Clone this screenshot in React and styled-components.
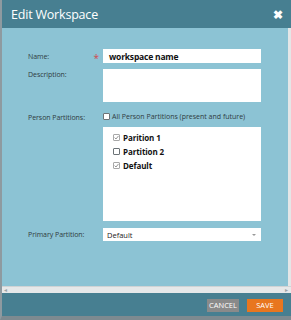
import React from 'react'
import { useState } from 'react'
import styled, { createGlobalStyle } from 'styled-components'

const GlobalStyle = createGlobalStyle`
  html, body {
    margin: 0;
    padding: 0;
    background: #ffffff;
  }
  body {
    font-family: "Open Sans", "Liberation Sans", sans-serif;
  }
`

const Dialog = styled.div`
  width: 291px;
  height: 320px;
  box-sizing: border-box;
  display: flex;
  flex-direction: column;
  border-left: 2px solid #8e9aa0;
  border-bottom: 4px solid #7d8a90;
  background-color: #477f91;
`
const Header = styled.div`
  height: 28px;
  flex: none;
  display: flex;
  align-items: center;
  justify-content: space-between;
  padding: 0 8px 0 9px;
  background-color: #477f91;
`
const Title = styled.h1`
  margin: 0;
  color: #ffffff;
  font-size: 12.5px;
  font-weight: 400;
  letter-spacing: -0.2px;
`
const Close = styled.span`
  color: #ffffff;
  font-size: 12px;
  font-weight: 700;
  line-height: 1;
  margin-top: 1px;
`
const BodyWrap = styled.div`
  flex: 1;
  display: flex;
  min-height: 0;
`
const Body = styled.div`
  flex: 1;
  background-color: #8cc3d4;
  padding: 21px 0 0 26px;
  display: grid;
  grid-template-columns: 68px 158px;
  column-gap: 7px;
  align-content: start;
`
const VScroll = styled.div`
  width: 3px;
  flex: none;
  background-color: #e4e6e7;
`
const HScroll = styled.div`
  height: 6px;
  flex: none;
  background-color: #e6e8e9;
  border-top: 1px solid #cfd3d5;
  display: flex;
  justify-content: space-between;
  align-items: center;
  padding: 0 3px 0 2px;
  color: #9aa2a6;
  font-size: 6px;
  line-height: 1;
`
const Label = styled.div`
  position: relative;
  color: #2f3b40;
  font-size: 7px;
  letter-spacing: -0.05px;
  padding-top: ${p => p.$top || 0}px;
  margin-bottom: ${p => p.$gap || 0}px;
`
const Star = styled.span`
  position: absolute;
  right: -3px;
  top: 2px;
  color: #d2494d;
  font-size: 10px;
`
const TextInput = styled.div`
  height: 14px;
  background: #ffffff;
  display: flex;
  align-items: center;
  padding-left: 6px;
  font-size: 8.5px;
  letter-spacing: -0.2px;
  font-weight: 700;
  color: #111;
  margin-bottom: ${p => p.$gap || 0}px;
`
const TextArea = styled.div`
  height: 33px;
  background: #ffffff;
  margin-bottom: ${p => p.$gap || 0}px;
`
const CheckRow = styled.label`
  display: flex;
  align-items: center;
  gap: 2px;
  height: 10px;
  font-size: 7px;
  color: #2f3b40;
  white-space: nowrap;
  margin-bottom: 6px;
`
const Box = styled.span`
  width: 7px;
  height: 7px;
  box-sizing: border-box;
  border: 1px solid ${p => (p.$dim ? '#a8a8a8' : '#6c7377')};
  background: #ffffff;
  border-radius: 1px;
  display: inline-flex;
  align-items: center;
  justify-content: center;
  flex: none;
`
const ListBox = styled.div`
  height: 94px;
  box-sizing: border-box;
  background: #ffffff;
  padding: 5px 0 0 10px;
  display: flex;
  flex-direction: column;
  gap: 4px;
  margin-bottom: 7px;
`
const ListItem = styled.div`
  display: flex;
  align-items: center;
  gap: 3px;
  height: 10px;
  font-size: 8px;
  letter-spacing: -0.1px;
  font-weight: 700;
  color: #111;
`
const Select = styled.div`
  height: 13px;
  background: #ffffff;
  display: flex;
  align-items: center;
  justify-content: space-between;
  padding: 0 5px 0 4px;
  font-size: 7.5px;
  color: #222;
`
const Caret = styled.span`
  width: 0;
  height: 0;
  border-left: 2px solid transparent;
  border-right: 2px solid transparent;
  border-top: 2px solid #999;
`
const Footer = styled.div`
  height: 23px;
  flex: none;
  display: flex;
  align-items: center;
  justify-content: flex-end;
  gap: 8px;
  padding-right: 8px;
  background-color: #477f91;
`
const Button = styled.button`
  height: 13px;
  border: none;
  padding: 0;
  width: ${p => p.$w}px;
  background: ${p => p.$bg};
  color: #ffffff;
  font-family: inherit;
  font-size: 7.5px;
  display: flex;
  align-items: center;
  justify-content: center;
  margin-top: 1px;
`

const Tick = ({ on }) =>
  on ? (
    <svg width='5' height='5' viewBox='0 0 5 5'>
      <path d='M0.6 2.6 L2 4 L4.5 0.9' fill='none' stroke='#8a8a8a' strokeWidth='0.9' />
    </svg>
  ) : null

function App () {
  const [parts] = useState([
    { name: 'Parition 1', on: true },
    { name: 'Partition 2', on: false },
    { name: 'Default', on: true }
  ])
  return (
    <>
      <GlobalStyle />
      <Dialog>
        <Header>
          <Title>Edit Workspace</Title>
          <Close>✖</Close>
        </Header>
        <BodyWrap>
          <Body>
            <Label $top={3}>
              Name:
              <Star>*</Star>
            </Label>
            <TextInput $gap={6}>workspace name</TextInput>
            <Label $top={1}>Description:</Label>
            <TextArea $gap={9} />
            <Label $top={2}>Person Partitions:</Label>
            <CheckRow>
              <Box />
              All Person Partitions (present and future)
            </CheckRow>
            <div />
            <ListBox>
              {parts.map(p => (
                <ListItem key={p.name}>
                  <Box $dim={p.on}>
                    <Tick on={p.on} />
                  </Box>
                  {p.name}
                </ListItem>
              ))}
            </ListBox>
            <Label $top={2}>Primary Partition:</Label>
            <Select>
              Default
              <Caret />
            </Select>
          </Body>
          <VScroll />
        </BodyWrap>
        <HScroll>
          <span>◂</span>
          <span>▸</span>
        </HScroll>
        <Footer>
          <Button $w={32} $bg='#8a8a8a'>CANCEL</Button>
          <Button $w={36} $bg='#e8761f'>SAVE</Button>
        </Footer>
      </Dialog>
    </>
  )
}

export default App
